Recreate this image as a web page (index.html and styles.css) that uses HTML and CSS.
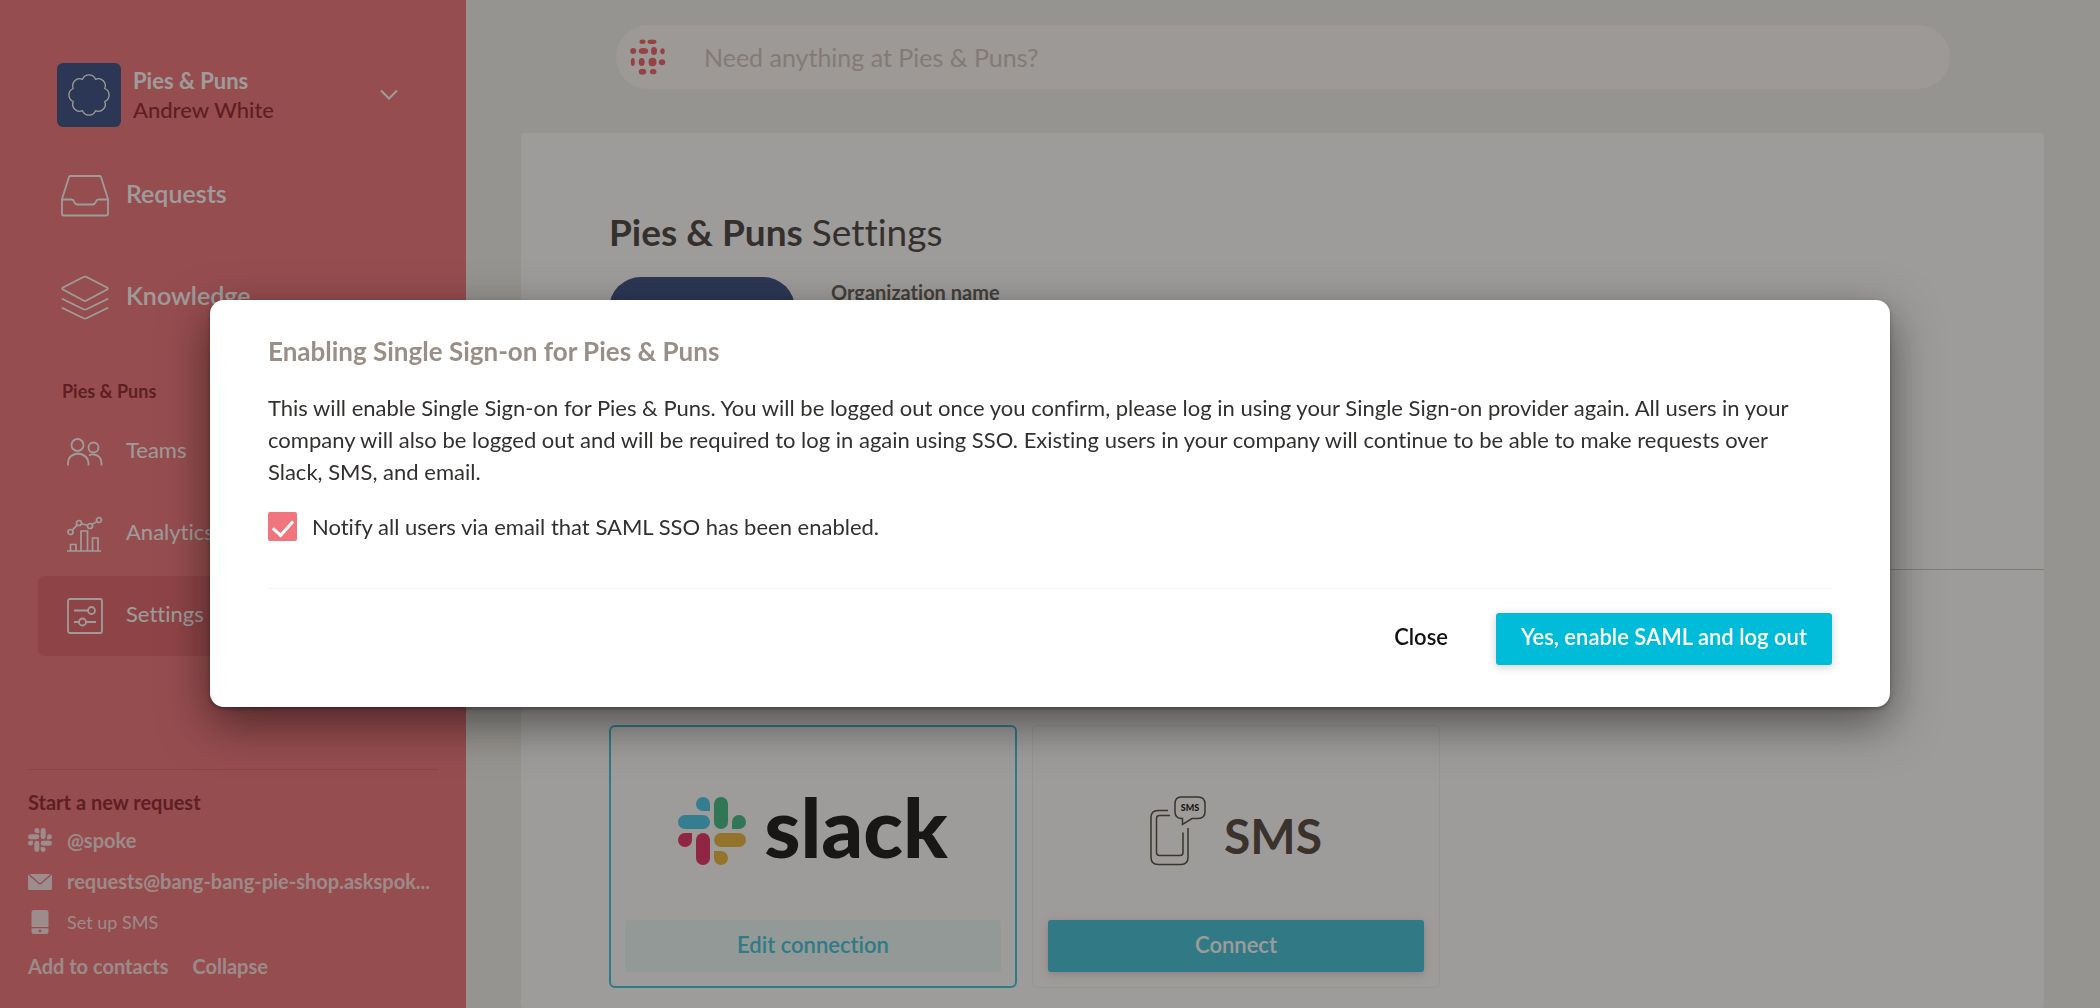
FILE: index.html
```html
<!DOCTYPE html>
<html lang="en">
<head>
    <meta charset="UTF-8">
    <meta name="viewport" content="width=device-width, initial-scale=1.0">
    <title>Pies &amp; Puns Settings</title>
    <link rel="stylesheet" href="styles.css">
</head>
<body>
    <div class="app">
        <aside class="sidebar">
            <button type="button" class="org">
                <span class="org-logo">
                    <svg width="44" height="44" viewBox="-22 -22 44 44" fill="none" stroke="#fff" stroke-width="1.3" stroke-linejoin="round">
                        <path d="M-6.5-15.7A7 7 0 0 1 6.5-15.7A7 7 0 0 1 15.7-6.5A7 7 0 0 1 15.7 6.5A7 7 0 0 1 6.5 15.7A7 7 0 0 1-6.5 15.7A7 7 0 0 1-15.7 6.5A7 7 0 0 1-15.7-6.5A7 7 0 0 1-6.5-15.7Z"/>
                    </svg>
                </span>
                <span class="org-text">
                    <strong>Pies &amp; Puns</strong>
                    <span class="org-user">Andrew White</span>
                </span>
                <svg class="org-arrow" width="18" height="12" viewBox="0 0 18 12" fill="none" stroke="#fff" stroke-width="2">
                    <path d="M1 1.5L9 9.5L17 1.5"/>
                </svg>
            </button>

            <nav class="menu-main">
                <a href="#">
                    <svg width="48" height="42" viewBox="0 0 48 42" fill="none" stroke="#fff" stroke-width="1.8" stroke-linejoin="round">
                        <path d="M9.500 1H38.500Q39.500 1 40 2L47 24V39Q47 40.500 45.500 40.500H2.500Q1 40.500 1 39V24L8 2Q8.500 1 9.500 1Z"/>
                        <path d="M1 24.500H10.500Q12.500 24.500 13 26.500Q14 29.500 16.500 29.500H31.500Q34 29.500 35 26.500Q35.500 24.500 37.500 24.500H47"/>
                    </svg>
                    <span>Requests</span>
                </a>
                <a href="#">
                    <svg width="48" height="46" viewBox="0 0 48 46" fill="none" stroke="#fff" stroke-width="1.8" stroke-linejoin="round" stroke-linecap="round">
                        <path d="M22.500 2Q24 1.200 25.500 2L46 12.500Q47.500 13.500 46 14.500L25.500 25.500Q24 26.300 22.500 25.500L2 14.500Q.5 13.500 2 12.500Z"/>
                        <path d="M1.500 24L22.500 34.300Q24 35 25.500 34.300L46.500 24"/>
                        <path d="M1.500 33L22.500 43.300Q24 44 25.500 43.300L46.500 33"/>
                    </svg>
                    <span>Knowledge</span>
                </a>
            </nav>

            <h2 class="menu-title">Pies &amp; Puns</h2>
            <nav class="menu-org">
                <a href="#">
                    <svg width="36" height="36" viewBox="0 0 36 36" fill="none" stroke="#fff" stroke-width="1.8">
                        <circle cx="10.500" cy="11" r="6"/>
                        <circle cx="26.500" cy="13.500" r="5"/>
                        <path d="M1 31.500V29Q1.500 20.500 11 19.500Q20.500 20.500 21.500 29V31.500"/>
                        <path d="M22 21.500Q24 20 27 20.500Q34 21.500 34.500 29V31.500"/>
                    </svg>
                    <span>Teams</span>
                </a>
                <a href="#">
                    <svg width="36" height="36" viewBox="0 0 36 36" fill="none" stroke="#fff" stroke-width="1.700">
                        <circle cx="3.500" cy="16" r="2.500"/>
                        <circle cx="12" cy="7" r="2.500"/>
                        <circle cx="23" cy="10" r="2.500"/>
                        <circle cx="32" cy="4" r="2.500"/>
                        <path d="M5.300 14.200L10.300 8.800M14.400 7.700L20.600 9.300M25.100 8.600L29.900 5.400"/>
                        <path d="M0 35H34"/>
                        <path d="M3.500 35V28.500H9V35M14 35V15H20.500V35M25.500 35V22H31V35"/>
                    </svg>
                    <span>Analytics</span>
                </a>
                <a href="#" class="active">
                    <svg width="36" height="36" viewBox="0 0 36 36" fill="none" stroke="#fff" stroke-width="1.800">
                        <rect x="1" y="1" width="34" height="34" rx="2"/>
                        <circle cx="24.500" cy="12.500" r="3.500"/>
                        <circle cx="15.500" cy="24" r="3.500"/>
                        <path d="M7 12.500H21M7 24H12M19 24H29"/>
                    </svg>
                    <span>Settings</span>
                </a>
            </nav>

            <div class="request">
                <h3>Start a new request</h3>
                <a href="#">
                    <svg width="24" height="24" viewBox="0 0 68 68" fill="currentColor">
                        <path d="M32 14H25A7 7 0 1 1 32 7Z"/>
                        <rect x="0" y="18" width="32" height="14" rx="7"/>
                        <rect x="36" y="0" width="14" height="32" rx="7"/>
                        <path d="M54 32V25A7 7 0 1 1 61 32Z"/>
                        <rect x="36" y="36" width="32" height="14" rx="7"/>
                        <path d="M36 54H43A7 7 0 1 1 36 61Z"/>
                        <rect x="18" y="36" width="14" height="32" rx="7"/>
                        <path d="M14 36V43A7 7 0 1 1 7 36Z"/>
                    </svg>
                    <strong>@spoke</strong>
                </a>
                <a href="#">
                    <svg width="24" height="24" viewBox="0 0 24 24" fill="currentColor">
                        <path d="M1.500 5H22.500L12.800 13.700Q12 14.300 11.200 13.700Z"/>
                        <path d="M0 5.500L10.300 14.800Q12 16 13.700 14.800L24 5.500V19.500Q24 21 22.500 21H1.500Q0 21 0 19.500Z"/>
                    </svg>
                    <strong>requests@bang-bang-pie-shop.askspok...</strong>
                </a>
                <a href="#">
                    <svg width="24" height="24" viewBox="0 0 24 24" fill="currentColor">
                        <path d="M6 0H18Q20.500 0 20.500 2.500V17H3.500V2.500Q3.500 0 6 0Z"/>
                        <path fill-rule="evenodd" d="M3.500 18.200H20.500V21.500Q20.500 24 18 24H6Q3.500 24 3.500 21.500ZM12 19.600A1.400 1.400 0 1 0 12 22.400A1.400 1.400 0 1 0 12 19.600Z"/>
                    </svg>
                    <span>Set up SMS</span>
                </a>
                <div class="request-links">
                    <a href="#">Add to contacts</a>
                    <button type="button">Collapse</button>
                </div>
            </div>
        </aside>

        <main class="main">
            <div class="search">
                <svg width="36" height="36" viewBox="0 0 36 36" fill="#f0525c">
                    <ellipse cx="12.500" cy="2.700" rx="3" ry="2.200"/>
                    <ellipse cx="22" cy="2.700" rx="4.500" ry="2.300"/>
                    <ellipse cx="3.200" cy="12" rx="3" ry="3"/>
                    <ellipse cx="13.500" cy="12" rx="4.800" ry="3"/>
                    <ellipse cx="24" cy="12" rx="3" ry="4"/>
                    <ellipse cx="32.500" cy="12.300" rx="2.200" ry="3"/>
                    <ellipse cx="2.800" cy="23" rx="2" ry="4"/>
                    <ellipse cx="11.700" cy="23" rx="3" ry="4"/>
                    <ellipse cx="22.500" cy="23" rx="4" ry="4.200"/>
                    <ellipse cx="32" cy="23.200" rx="3.200" ry="3"/>
                    <ellipse cx="12.500" cy="32.700" rx="3.800" ry="3"/>
                    <ellipse cx="23.200" cy="32.700" rx="3.300" ry="2.600"/>
                </svg>
                <input type="text" placeholder="Need anything at Pies &amp; Puns?" aria-label="Search">
            </div>

            <section class="panel">
                <div class="general">
                    <h1>Pies &amp; Puns <span>Settings</span></h1>
                    <div class="profile">
                        <div class="profile-logo"></div>
                        <h4>Organization name</h4>
                    </div>
                </div>

                <div class="cards">
                    <div class="card on">
                        <div class="brand slack">
                            <svg width="68" height="68" viewBox="0 0 68 68">
                                <g fill="#36c5f0">
                                    <path d="M32 14H25A7 7 0 1 1 32 7Z"/>
                                    <rect x="0" y="18" width="32" height="14" rx="7"/>
                                </g>
                                <g fill="#2eb67d">
                                    <rect x="36" y="0" width="14" height="32" rx="7"/>
                                    <path d="M54 32V25A7 7 0 1 1 61 32Z"/>
                                </g>
                                <g fill="#ecb22e">
                                    <rect x="36" y="36" width="32" height="14" rx="7"/>
                                    <path d="M36 54H43A7 7 0 1 1 36 61Z"/>
                                </g>
                                <g fill="#e01e5a">
                                    <rect x="18" y="36" width="14" height="32" rx="7"/>
                                    <path d="M14 36V43A7 7 0 1 1 7 36Z"/>
                                </g>
                            </svg>
                            <span>slack</span>
                        </div>
                        <button type="button" class="btn soft">Edit connection</button>
                    </div>
                    <div class="card">
                        <div class="brand sms">
                            <svg width="56" height="70" viewBox="0 0 56 70" fill="none" stroke="#40382f" stroke-width="1.500">
                                <path d="M18 14.500H8Q1 14.500 1 21.500V61Q1 68.500 8 68.500H31Q38 68.500 38 61V32"/>
                                <path d="M20 19.500H9.500Q6.500 19.500 6.500 22.500V56.500Q6.500 59.500 9.500 59.500H30Q33 59.500 33 56.500V36.500"/>
                                <path d="M31 1H48Q55 1 55 8V15.500Q55 22.500 48 22.500H42L32.500 28.500V22.500H31Q25 22 25 15.500V8Q25 1 31 1Z"/>
                                <text x="40" y="15" text-anchor="middle" fill="#000" stroke="none" class="bubble">SMS</text>
                            </svg>
                            <span>SMS</span>
                        </div>
                        <button type="button" class="btn">Connect</button>
                    </div>
                </div>
            </section>
        </main>
    </div>

    <div class="overlay">
        <div class="modal" role="dialog" aria-modal="true" aria-labelledby="modal-title">
            <h2 id="modal-title">Enabling Single Sign-on for Pies &amp; Puns</h2>
            <p>This will enable Single Sign-on for Pies &amp; Puns. You will be logged out once you confirm, please log in using your Single Sign-on provider again. All users in your company will also be logged out and will be required to log in again using SSO. Existing users in your company will continue to be able to make requests over Slack, SMS, and email.</p>
            <div class="check">
                <input type="checkbox" id="notify" checked>
                <label for="notify">Notify all users via email that SAML SSO has been enabled.</label>
            </div>
            <div class="actions">
                <button type="button" class="close">Close</button>
                <button type="button" class="confirm">Yes, enable SAML and log out</button>
            </div>
        </div>
    </div>
</body>
</html>
```
FILE: styles.css
```css
* {
    margin: 0;
    padding: 0;
    box-sizing: border-box;
}

body {
    font-family: Lato, "Liberation Sans", sans-serif;
    font-size: 22px;
    font-variant-ligatures: none;
    color: #33312f;
    background-color: #f0efeb;
}

a {
    color: inherit;
    text-decoration: none;
}

button {
    font: inherit;
    color: inherit;
    background: none;
    border: none;
    cursor: pointer;
}

svg {
    flex: none;
}

.app {
    display: flex;
    height: 100vh;
    min-height: 1008px;
    overflow: hidden;
}

/* Sidebar */
.sidebar {
    display: flex;
    flex-direction: column;
    flex: none;
    width: 466px;
    padding: 60px 28px 30px;
    background-color: #f06871;
    color: #fff;
}

.org {
    display: flex;
    align-items: center;
    gap: 12px;
    padding: 0 40px 0 29px;
    font-size: 22px;
    line-height: 29px;
    text-align: left;
}

.org-logo {
    display: flex;
    align-items: center;
    justify-content: center;
    width: 64px;
    height: 64px;
    margin: 3px 0;
    border-radius: 6px;
    background-color: #263f7b;
}

.org-text {
    display: flex;
    flex-direction: column;
    flex: 1;
}

.org-user {
    color: #850f19;
    font-weight: 500;
}

.menu-main {
    display: flex;
    flex-direction: column;
    margin-top: 15px;
    padding-left: 33px;
    font-size: 25px;
    font-weight: 600;
}

.menu-main a {
    display: flex;
    align-items: center;
    gap: 17px;
    height: 102px;
}

.menu-main span,
.menu-org span {
    padding-bottom: 6px;
}

.menu-title {
    margin-top: 30px;
    padding-left: 34px;
    font-size: 18px;
    line-height: 24px;
    color: #850f19;
}

.menu-org {
    display: flex;
    flex-direction: column;
    gap: 2px;
    margin-top: 9px;
    padding-left: 10px;
}

.menu-org a {
    display: flex;
    align-items: center;
    gap: 23px;
    height: 80px;
    padding-left: 29px;
    border-radius: 6px;
}

.menu-org .active {
    background-color: #e15761;
}

.request {
    margin-top: auto;
    padding-top: 20px;
    border-top: 1px solid #d85a62;
    font-size: 20px;
    color: rgba(255, 255, 255, 0.8);
}

.request h3 {
    font-size: 20px;
    line-height: 24px;
    color: #850f19;
}

.request > a {
    display: flex;
    align-items: center;
    gap: 15px;
    margin-top: 17px;
    line-height: 24px;
}

.request > a span {
    font-size: 18px;
}

.request h3 + a {
    margin-top: 14px;
}

.request-links {
    display: flex;
    gap: 24px;
    margin-top: 20px;
    line-height: 24px;
    font-weight: bold;
}

.request-links button {
    font-weight: bold;
}

/* Page */
.main {
    display: flex;
    flex-direction: column;
    flex: 1;
    padding: 25px 56px 0 55px;
}

.search {
    display: flex;
    align-items: center;
    gap: 38px;
    height: 64px;
    margin: 0 94px 44px 95px;
    padding: 0 14px;
    border-radius: 32px;
    background-color: #fbfaf7;
}

.search input {
    flex: 1;
    border: none;
    outline: none;
    background: none;
    font: inherit;
    font-size: 25px;
}

.search input::placeholder {
    color: #cdbfb9;
    opacity: 1;
}

.panel {
    flex: 1;
    border-radius: 3px;
    background-color: #fff;
}

.general {
    height: 437px;
    padding: 75px 88px 0;
    border-bottom: 1px solid #c5c2bf;
}

.general h1 {
    font-size: 37px;
    line-height: 48px;
}

.general h1 span {
    font-weight: normal;
}

.profile {
    display: flex;
    gap: 36px;
    margin-top: 21px;
}

.profile-logo {
    width: 186px;
    height: 186px;
    border-radius: 32px;
    background-color: #263f7b;
}

.profile h4 {
    margin-top: 3px;
    font-size: 20px;
    line-height: 24px;
    color: #534f4b;
}

.cards {
    display: flex;
    gap: 15px;
    padding: 155px 88px 0;
}

.card {
    display: flex;
    flex-direction: column;
    width: 408px;
    height: 263px;
    padding: 15px;
    border: 1px solid #f0eeec;
    border-radius: 6px;
}

.card.on {
    border: 2px solid #2abed6;
    padding: 14px;
}

.brand {
    display: flex;
    flex: 1;
    align-items: center;
    justify-content: center;
    gap: 18px;
    font-weight: bold;
}

.slack {
    font-size: 82px;
    font-weight: 900;
    line-height: 64px;
    color: #000;
}

.slack span {
    padding-bottom: 10px;
}

.sms {
    font-size: 48px;
    line-height: 64px;
    color: #40362f;
}

.sms span {
    padding-top: 10px;
}

.bubble {
    font-size: 9px;
    font-weight: 900;
}

.btn {
    height: 52px;
    padding-bottom: 4px;
    border-radius: 3px;
    background-color: #2fbfd6;
    box-shadow: 0 2px 8px rgba(80, 30, 20, 0.25);
    color: #fff;
    font-weight: 600;
}

.btn.soft {
    background-color: #eafafa;
    box-shadow: none;
    color: #2abed6;
}

/* Modal */
.overlay {
    position: fixed;
    inset: 0;
    display: flex;
    align-items: center;
    justify-content: center;
    padding-bottom: 2px;
    background-color: rgba(53, 48, 43, 0.48);
}

.modal {
    width: 80%;
    padding: 33px 58px 42px;
    border-radius: 14px;
    background-color: #fff;
    box-shadow: 0 16px 48px rgba(0, 0, 0, 0.5), 0 2px 4px rgba(0, 0, 0, 0.3);
}

.modal h2 {
    font-size: 26px;
    line-height: 36px;
    color: #9a8f87;
}

.modal p {
    margin-top: 23px;
    padding-right: 24px;
    line-height: 32px;
}

.check {
    display: flex;
    align-items: center;
    gap: 15px;
    margin-top: 23px;
    padding-bottom: 45px;
    border-bottom: 1px solid #f5f4f3;
}

.check input {
    appearance: none;
    display: flex;
    justify-content: center;
    width: 29px;
    height: 29px;
    border-radius: 2px;
    background-color: #f0757f;
}

.check input:checked::after {
    content: "";
    width: 9px;
    height: 17px;
    margin-top: 4px;
    border: solid #fff;
    border-width: 0 3px 3px 0;
    transform: rotate(42deg);
}

.check label {
    line-height: 32px;
}

.actions {
    display: flex;
    justify-content: flex-end;
    gap: 48px;
    margin-top: 24px;
}

.actions button {
    height: 52px;
    padding-bottom: 4px;
    font-weight: 600;
}

.actions .close {
    color: #111;
}

.actions .confirm {
    padding: 0 25px 4px;
    border-radius: 3px;
    background-color: #00bcd8;
    box-shadow: 0 2px 10px rgba(0, 0, 0, 0.2);
    color: #fff;
}
```
